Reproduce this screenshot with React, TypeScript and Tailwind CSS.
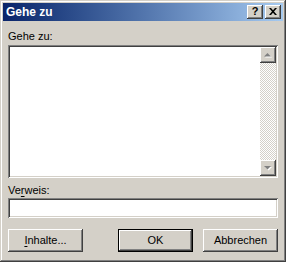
const raised =
    "shadow-[inset_-1px_-1px_#404040,inset_1px_1px_#ffffff,inset_-2px_-2px_#808080,inset_2px_2px_#d4d0c8]";
const sunken =
    "shadow-[inset_1px_1px_#808080,inset_-1px_-1px_#ffffff,inset_2px_2px_#404040,inset_-2px_-2px_#d4d0c8]";

function Arrow({ down }: { down?: boolean }) {
    const pts = down ? "0,0 7,0 3.5,3.5" : "0,3.5 7,3.5 3.5,0";
    return (
        <svg width="8" height="5" viewBox="0 0 8 5" className="block">
            <polygon points={pts} transform="translate(1,1)" fill="#ffffff" />
            <polygon points={pts} fill="#808080" />
        </svg>
    );
}

function Button({ label, mnemonic, isDefault }: { label: string; mnemonic?: number; isDefault?: boolean }) {
    const text =
        mnemonic === undefined ? (
            label
        ) : (
            <>
                {label.slice(0, mnemonic)}
                <span className="underline underline-offset-2">{label[mnemonic]}</span>
                {label.slice(mnemonic + 1)}
            </>
        );
    return (
        <button
            className={`flex h-[23px] w-[75px] items-center justify-center bg-[#d4d0c8] text-[11px] leading-[13px] text-black ${raised} ${isDefault ? "border border-black" : ""}`}
        >
            {text}
        </button>
    );
}

export default function App() {
    return (
        <div
            className="flex h-[262px] w-[286px] flex-col bg-[#d4d0c8] p-[3px] text-black shadow-[inset_-1px_-1px_#404040,inset_1px_1px_#d4d0c8,inset_-2px_-2px_#808080,inset_2px_2px_#ffffff]"
            style={{ fontFamily: '"Liberation Sans", Arial, sans-serif' }}
        >
            {/* title bar */}
            <div className="flex h-[18px] items-center bg-gradient-to-r from-[#0a246a] to-[#a6caf0] pl-[3px] pr-[2px]">
                <span className="flex-1 text-[12px] font-bold leading-[14px] text-white">Gehe zu</span>
                <div className={`flex h-[14px] w-[16px] items-center justify-center bg-[#d4d0c8] ${raised}`}>
                    <span className="mt-[-1px] text-[11px] font-bold leading-[11px]">?</span>
                </div>
                <div className={`ml-[2px] flex h-[14px] w-[16px] items-center justify-center bg-[#d4d0c8] ${raised}`}>
                    <svg width="8" height="7" viewBox="0 0 8 7" className="mt-[-1px] block">
                        <path d="M0 0h2l2 2.2L6 0h2L5 3.5 8 7H6L4 4.8 2 7H0l3-3.5z" fill="#000" />
                    </svg>
                </div>
            </div>

            {/* content */}
            <div className="flex flex-1 flex-col px-[5px] pt-[9px]">
                <div className="text-[11px] leading-[13px]">Gehe zu:</div>
                <div className={`mt-[2px] flex h-[133px] bg-white p-[2px] ${sunken}`}>
                    <div className="flex-1" />
                    <div className="flex w-[16px] flex-col">
                        <div className={`flex h-[16px] items-center justify-center bg-[#d4d0c8] ${raised}`}>
                            <Arrow />
                        </div>
                        <div className="flex-1 bg-[repeating-conic-gradient(#d4d0c8_0%_25%,#ffffff_0%_50%)] bg-[length:2px_2px]" />
                        <div className={`flex h-[16px] items-center justify-center bg-[#d4d0c8] ${raised}`}>
                            <Arrow down />
                        </div>
                    </div>
                </div>

                <div className="mt-[6px] text-[11px] leading-[13px]">
                    Ve<span className="underline underline-offset-2">r</span>weis:
                </div>
                <div className={`mt-[1px] h-[20px] bg-white ${sunken}`} />

                <div className="mt-[11px] flex items-center">
                    <Button label="Inhalte..." mnemonic={0} />
                    <div className="flex-1" />
                    <Button label="OK" isDefault />
                    <div className="w-[10px]" />
                    <Button label="Abbrechen" />
                </div>
            </div>
        </div>
    );
}
